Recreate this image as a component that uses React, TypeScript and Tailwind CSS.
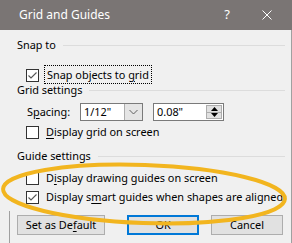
import React from "react";

function Check({ checked }: { checked?: boolean }) {
  return (
    <div className="w-[13px] h-[13px] shrink-0 border border-[#333333] bg-white flex items-center justify-center">
      {checked && (
        <svg width="11" height="11" viewBox="0 0 11 11">
          <polyline points="1.5,5.5 4,8 9.5,2.5" fill="none" stroke="#555555" strokeWidth="1.1" />
        </svg>
      )}
    </div>
  );
}

function Heading({ label, className }: { label: string; className?: string }) {
  return (
    <div className={"flex items-center h-3 pl-[17px] pr-[6px] " + (className ?? "")}>
      <span className="leading-none">{label}</span>
      <div className="ml-[7px] flex-1 h-px bg-[#dcdcdc]" />
    </div>
  );
}

function CheckRow({
  checked,
  children,
  className,
}: {
  checked?: boolean;
  children: React.ReactNode;
  className?: string;
}) {
  return (
    <div className={"flex items-center h-4 pl-[26px] gap-[7px] " + (className ?? "")}>
      <Check checked={checked} />
      <span className="leading-none whitespace-nowrap">{children}</span>
    </div>
  );
}

export default function App() {
  return (
    <div className="relative w-[292px] h-[243px] overflow-hidden bg-[#f0f0f0] text-[10.9px] text-black font-['Segoe_UI','Noto_Sans',sans-serif]">
      {/* title bar */}
      <div className="h-[30px] bg-[#7a7574] flex items-center pl-[19px] text-white">
        <span className="flex-1 text-[12px]">Grid and Guides</span>
        <span className="w-[20px] text-center text-[13px] mr-[25px]">?</span>
        <svg width="10" height="10" viewBox="0 0 10 10" className="mr-[20px]">
          <path d="M0.5 0.5 L9.5 9.5 M9.5 0.5 L0.5 9.5" stroke="#ffffff" strokeWidth="1" />
        </svg>
      </div>

      {/* body */}
      <div className="h-[213px] border-r border-[#a0a0a0] pt-[8px] flex flex-col">
        <Heading label="Snap to" className="h-[14px]" />
        <CheckRow checked className="mt-[15px]">
          <span className="outline outline-1 outline-dotted outline-black outline-offset-[1px] px-px">
            Snap objects to <u className="underline-offset-2">g</u>rid
          </span>
        </CheckRow>
        <Heading label="Grid settings" className="mt-px" />

        <div className="flex items-center h-[18px] mt-[7px] pl-[27px]">
          <span className="w-[53px] leading-none">
            S<u className="underline-offset-2">p</u>acing:
          </span>
          <div className="flex w-[63px] h-[18px] border border-[#7a7a7a] bg-white">
            <span className="flex-1 pl-[3px] leading-[16px]">1/12"</span>
            <div className="w-[18px] bg-[#e5e5e5] border-l border-[#adadad] flex items-center justify-center">
              <svg width="9" height="6" viewBox="0 0 9 6">
                <polyline points="0.5,1 4.5,5 8.5,1" fill="none" stroke="#606060" strokeWidth="1" />
              </svg>
            </div>
          </div>
          <div className="flex ml-[10px] w-[71px] h-[18px] border border-[#7a7a7a] bg-white">
            <span className="flex-1 pl-[3px] leading-[16px]">0.08"</span>
            <div className="w-[16px] my-px mr-px flex flex-col border border-[#adadad] bg-[#e1e1e1]">
              <div className="flex-1 flex items-center justify-center border-b border-[#adadad]">
                <svg width="7" height="4" viewBox="0 0 7 4">
                  <polygon points="0,4 3.5,0 7,4" fill="#000000" />
                </svg>
              </div>
              <div className="flex-1 flex items-center justify-center">
                <svg width="7" height="4" viewBox="0 0 7 4">
                  <polygon points="0,0 7,0 3.5,4" fill="#000000" />
                </svg>
              </div>
            </div>
          </div>
        </div>

        <CheckRow className="mt-[3px]">
          <u className="underline-offset-2">D</u>isplay grid on screen
        </CheckRow>
        <Heading label="Guide settings" className="mt-[10px]" />
        <CheckRow className="mt-[8px]">
          D<u className="underline-offset-2">i</u>splay drawing guides on screen
        </CheckRow>
        <CheckRow checked className="mt-[3px]">
          Display s<u className="underline-offset-2">m</u>art guides when shapes are aligned
        </CheckRow>

        <div className="relative flex-1 mt-[10px] flex items-start pl-[17px]">
          <button className="w-[88px] h-[20px] bg-[#e1e1e1] border border-[#adadad] leading-none">
            Set as De<u className="underline-offset-2">f</u>ault
          </button>
          <button className="ml-[22px] w-[72px] h-[20px] bg-[#e1e1e1] border-2 border-[#0078d7] leading-none">
            OK
          </button>
          <button className="ml-[12px] w-[72px] h-[20px] bg-[#e1e1e1] border border-[#adadad] leading-none">
            Cancel
          </button>
          <div className="absolute left-[9px] top-[-4px] bottom-0 w-px bg-[#a0a0a0]" />
        </div>
      </div>

      {/* highlight ellipse drawn over the dialog */}
      <svg
        className="absolute inset-0 pointer-events-none"
        width="292"
        height="243"
        viewBox="0 0 292 243"
      >
        <ellipse
          cx="144"
          cy="194"
          rx="141"
          ry="29"
          transform="rotate(2 144 194)"
          fill="none"
          stroke="#f2b51f"
          strokeWidth="4"
        />
      </svg>
    </div>
  );
}
